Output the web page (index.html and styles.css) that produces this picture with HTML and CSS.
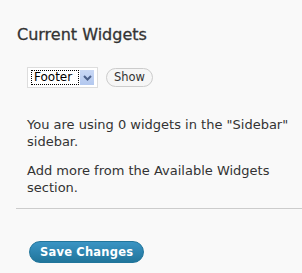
FILE: index.html
```html
<!DOCTYPE html>
<html>
<head>
<meta charset="utf-8">
<link rel="stylesheet" href="styles.css">
</head>
<body>
<div class="wrap">
  <h3 class="title">Current Widgets</h3>
  <div class="picker">
    <div class="select">
      <span class="value">Footer</span>
      <span class="arrow"><svg width="9" height="6" viewBox="0 0 9 6"><path d="M1 1 L4.5 4.5 L8 1" fill="none" stroke="#4a5f8a" stroke-width="2"/></svg></span>
    </div>
    <button class="show">Show</button>
  </div>
  <div class="info">
    <p>You are using 0 widgets in the "Sidebar" sidebar.</p>
    <p>Add more from the Available Widgets section.</p>
  </div>
  <hr class="rule">
  <div class="actions">
    <button class="save">Save Changes</button>
  </div>
</div>
</body>
</html>
```
FILE: styles.css
```css
html, body {
  margin: 0;
  padding: 0;
  background: #f9f9f9;
}
body {
  font-family: "DejaVu Sans", Verdana, sans-serif;
  color: #333;
}
.wrap {
  padding: 26px 0 0 16px;
}
.title {
  margin: 0;
  font-size: 16px;
  font-weight: normal;
  line-height: 18px;
  color: #333;
  padding-left: 1px;
  -webkit-text-stroke: 0.3px #333;
}
.picker {
  display: flex;
  align-items: center;
  gap: 8px;
  margin: 23px 0 0 11px;
}
.select {
  display: flex;
  align-items: center;
  gap: 1px;
  height: 21px;
  box-sizing: border-box;
  padding: 2px 3px 2px 3px;
  background: #fff;
  border: 1px solid #ddd;
}
.value {
  display: block;
  border: 1px dotted #000;
  font-size: 12px;
  line-height: 13px;
  padding: 0 2px;
  width: 42px;
  color: #000;
}
.arrow {
  display: flex;
  align-items: center;
  justify-content: center;
  width: 14px;
  height: 15px;
  background: linear-gradient(#c9d8f5, #b3c8ef);
}
.show {
  font-family: inherit;
  font-size: 11.5px;
  color: #333;
  background: #f6f6f6;
  border: 1px solid #ccc;
  border-radius: 10px;
  height: 19px;
  padding: 0 7px;
  line-height: 17px;
}
.info {
  margin: 28px 0 0 11px;
  padding-right: 4px;
  font-size: 13px;
  line-height: 17px;
  color: #333;
}
.info p {
  margin: 0 0 12px;
}
.rule {
  margin: 3px 0 0 0;
  border: 0;
  border-top: 1px solid #ccc;
  height: 0;
}
.actions {
  margin: 32px 0 0 13px;
}
.save {
  font-family: inherit;
  font-size: 11.5px;
  font-weight: bold;
  color: #fff;
  border: 1px solid #21759b;
  border-radius: 11px;
  height: 22px;
  padding: 0 10px;
  background: linear-gradient(#3a94c4, #21759b);
  letter-spacing: 0.2px;
}
```
